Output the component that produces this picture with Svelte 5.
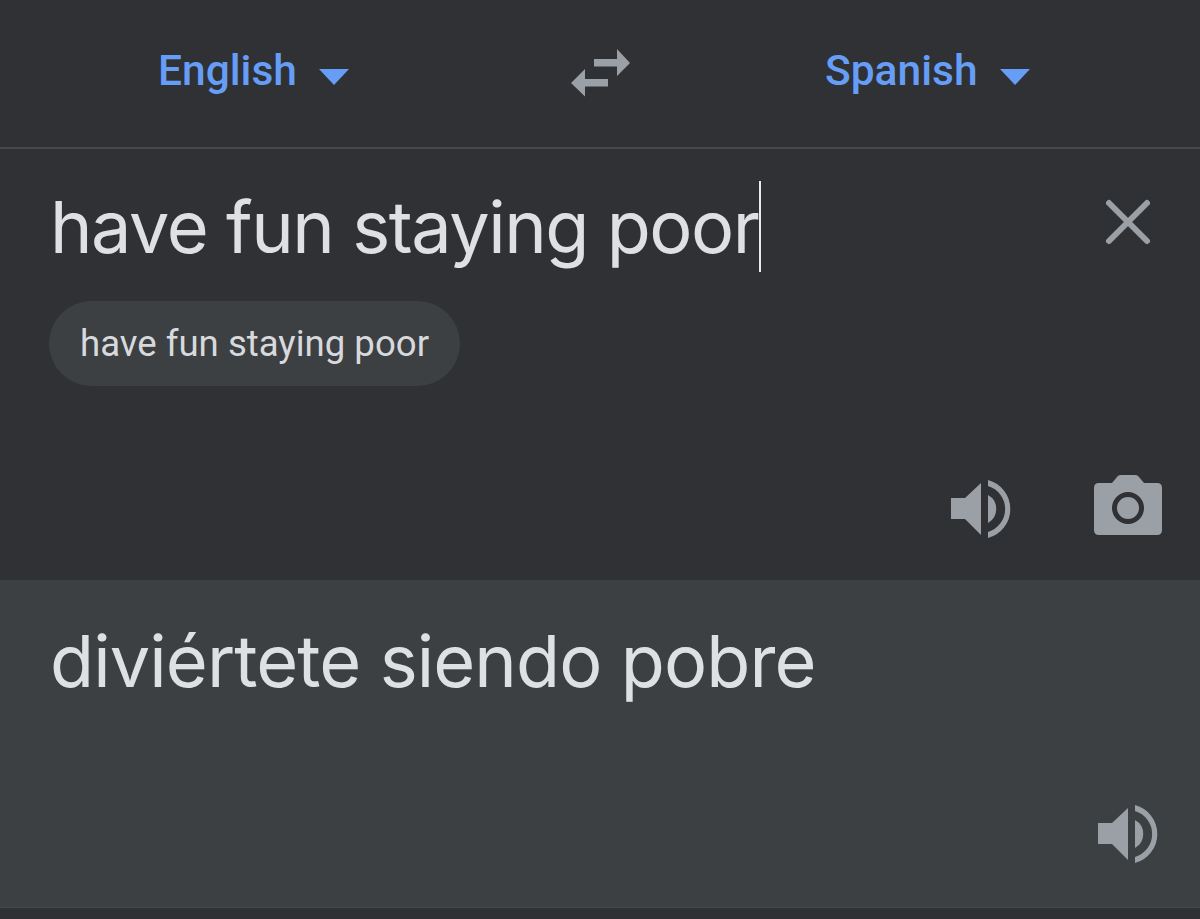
<script>
  let source = "have fun staying poor";
  let target = "diviértete siendo pobre";
</script>

<div class="screen">
  <header class="lang-bar">
    <button class="lang from">English <svg class="drop" viewBox="0 0 30 16"><path d="M0 0H30L15 16Z" /></svg></button>
    <svg class="swap" viewBox="0 0 60 48">
      <path d="M23 10H46V0L59 14 46 27V17.500H23Z" />
      <path d="M37 30H14V20L0 34 14 47.500V37.500H37Z" />
    </svg>
    <button class="lang to">Spanish <svg class="drop" viewBox="0 0 30 16"><path d="M0 0H30L15 16Z" /></svg></button>
  </header>

  <section class="input">
    <div class="input-row">
      <div class="big">{source}<span class="caret"></span></div>
      <svg class="close" viewBox="0 0 48 48">
        <path d="M5 5L43 43M43 5L5 43" />
      </svg>
    </div>
    <div class="chip">{source}</div>
    <div class="actions">
      <svg class="speaker" viewBox="0 0 62 60">
        <path d="M1 19H15L31 4V56L15 40H1Z" />
        <path d="M38 1A30 30 0 0 1 38 59V53A24 24 0 0 0 38 7Z" />
        <path d="M38 16A16 16 0 0 1 38 44Z" />
      </svg>
      <svg class="camera" viewBox="0 0 68 60">
        <path fill-rule="evenodd" d="M5 8H18L23 2Q24 0 27 0H41Q44 0 45 2L50 8H63Q68 8 68 13V55Q68 60 63 60H5Q0 60 0 55V13Q0 8 5 8ZM34 17A16 16 0 1 0 34 49A16 16 0 1 0 34 17ZM34 22A11 11 0 1 1 34 44A11 11 0 1 1 34 22Z" />
      </svg>
    </div>
  </section>

  <section class="output">
    <div class="big">{target}</div>
    <div class="actions">
      <svg class="speaker" viewBox="0 0 62 60">
        <path d="M1 19H15L31 4V56L15 40H1Z" />
        <path d="M38 1A30 30 0 0 1 38 59V53A24 24 0 0 0 38 7Z" />
        <path d="M38 16A16 16 0 0 1 38 44Z" />
      </svg>
    </div>
  </section>
</div>

<style>
  :global(body) {
    background: #303134;
  }
  .screen {
    display: flex;
    flex-direction: column;
    height: 919px;
    background: #303134;
    font-family: Roboto, sans-serif;
    overflow: hidden;
  }
  .lang-bar {
    display: grid;
    grid-template-columns: 1fr auto 1fr;
    align-items: center;
    height: 149px;
    flex: none;
    box-sizing: border-box;
    border-bottom: 2px solid #46484b;
    padding-bottom: 2px;
  }
  .lang {
    background: none;
    border: none;
    padding: 0;
    margin-bottom: 4px;
    color: #669df6;
    font: 500 42.5px Roboto, sans-serif;
    display: flex;
    align-items: center;
    gap: 22px;
  }
  .from {
    padding-left: 158px;
  }
  .to {
    padding-left: 195px;
  }
  .drop {
    width: 30px;
    height: 16px;
    fill: #669df6;
    margin-top: 12px;
  }
  .swap {
    width: 60px;
    height: 48px;
    fill: #9aa0a6;
    margin: 0 -1px 0 1px;
  }
  .input {
    height: 430px;
    flex: none;
    display: flex;
    flex-direction: column;
    padding: 32px 38px 40px 50px;
    box-sizing: border-box;
  }
  .input-row {
    display: flex;
    justify-content: space-between;
    align-items: flex-start;
  }
  .big {
    font: 400 72px/92px Inter, sans-serif;
    color: #dfe0e4;
    letter-spacing: -1.45px;
  }
  .output .big {
    letter-spacing: -0.9px;
  }
  .caret {
    display: inline-block;
    width: 2px;
    height: 91px;
    margin-left: 1px;
    background: #e8eaed;
    vertical-align: top;
  }
  .close {
    width: 48px;
    height: 48px;
    stroke: #9aa0a6;
    stroke-width: 6;
    stroke-linecap: round;
    fill: none;
    margin: 17px 10px 0 0;
  }
  .chip {
    align-self: flex-start;
    margin-top: 28px;
    margin-left: -1px;
    height: 85px;
    padding: 0 31px;
    display: flex;
    align-items: center;
    border-radius: 43px;
    background: #3c4043;
    color: #d8d9dd;
    font-size: 36.6px;
  }
  .actions {
    margin-top: auto;
    display: flex;
    justify-content: flex-end;
    align-items: flex-start;
    gap: 82px;
  }
  .speaker {
    width: 62px;
    height: 60px;
    fill: #9aa0a6;
    margin-top: 4px;
  }
  .camera {
    width: 68px;
    height: 60px;
    fill: #9aa0a6;
  }
  .output {
    margin-top: 1px;
    height: 328px;
    flex: none;
    display: flex;
    flex-direction: column;
    padding: 35px 41px 43px 50px;
    box-sizing: border-box;
    background: #3c4043;
    border-bottom: 1px solid #46494c;
  }
</style>
